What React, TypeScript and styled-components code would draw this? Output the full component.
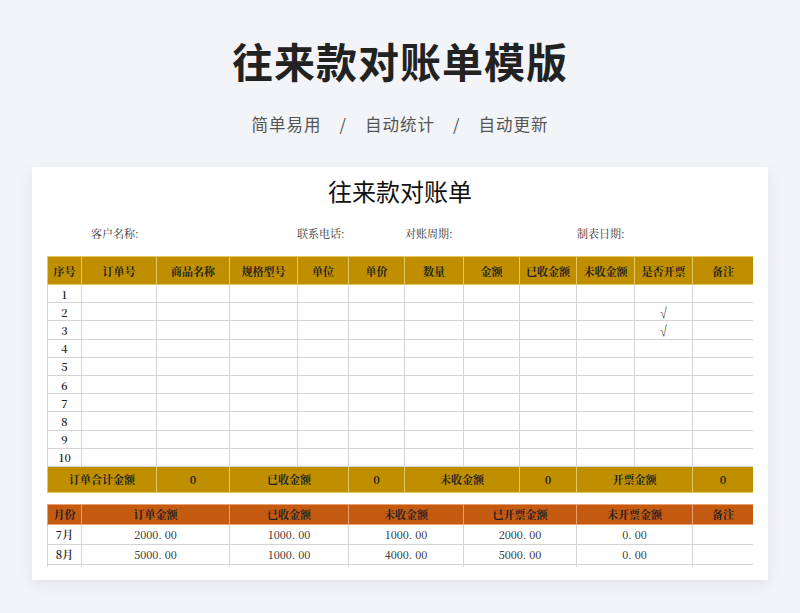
import React from "react";
import styled, { createGlobalStyle } from "styled-components";

const Global = createGlobalStyle`
  html, body { margin: 0; padding: 0; background: #f2f4f7; }
  body { font-family: "Noto Sans CJK SC", sans-serif; }
`;

const Page = styled.div`
  width: 800px; height: 613px; overflow: hidden;
  display: flex; flex-direction: column; align-items: center;
`;
const BigTitle = styled.h1`
  margin: 33px 0 0; font-size: 41px; line-height: 54px; font-weight: 700; color: #222;
  letter-spacing: 1px;
`;
const Sub = styled.div`
  margin-top: 25px; font-size: 16.5px; line-height: 24px; color: #555; display: flex; gap: 18px;
  letter-spacing: 1px;
`;
const Card = styled.div`
  margin-top: 31px; width: 736px; height: 413px; flex-shrink: 0; background: #fff;
  box-shadow: 0 4px 14px rgba(0,0,0,0.08); overflow: hidden; box-sizing: border-box;
  padding: 0 15px 13px 15px;
  font-family: "Noto Serif CJK SC", "Noto Sans CJK SC", serif;
`;
const Clip = styled.div`
  height: 100%; overflow: hidden;
`;
const SheetTitle = styled.div`
  text-align: center; font-size: 24px; line-height: 30px; margin-top: 9px; color: #111;
  font-family: "Noto Sans CJK SC", sans-serif;
`;
const Info = styled.div`
  display: grid; grid-template-columns: 44px 206px 108px 172px 1fr;
  font-size: 11px; color: #333; margin-top: 19px; height: 18px;
  span { white-space: nowrap; }
`;
const Table = styled.table`
  border-collapse: collapse; table-layout: fixed; width: 706px;
  margin-top: ${(p: { $mt: number }) => p.$mt}px;
  font-size: 11px;
  td, th { padding: 0; text-align: center; border: 1px solid #d4d4d4; overflow: hidden; white-space: nowrap; }
`;
const HeadRow = styled.tr<{ $bg: string; $bd: string; $h: number }>`
  height: ${p => p.$h}px;
  th, td { background: ${p => p.$bg}; border-color: ${p => p.$bd}; font-weight: 700; color: #222; }
`;
const Row = styled.tr<{ $h: number }>`
  height: ${p => p.$h}px; color: #222;
  td:first-child { font-weight: 600; }
`;

const cols = [34, 75, 73, 68, 51, 56, 59, 56, 57, 58, 58, 61];
const heads = ["序号", "订单号", "商品名称", "规格型号", "单位", "单价", "数量", "金额", "已收金额", "未收金额", "是否开票", "备注"];
const cols2 = [34, 148, 119, 115, 113, 116, 61];
const heads2 = ["月份", "订单金额", "已收金额", "未收金额", "已开票金额", "未开票金额", "备注"];
const data2 = [
  ["7月", "2000. 00", "1000. 00", "1000. 00", "2000. 00", "0. 00", ""],
  ["8月", "5000. 00", "1000. 00", "4000. 00", "5000. 00", "0. 00", ""],
  ["", "", "", "", "", "", ""],
];

export default function App() {
  return (
    <Page>
      <Global />
      <BigTitle>往来款对账单模版</BigTitle>
      <Sub><span>简单易用</span><span>/</span><span>自动统计</span><span>/</span><span>自动更新</span></Sub>
      <Card>
        <Clip>
          <SheetTitle>往来款对账单</SheetTitle>
          <Info><span /><span>客户名称:</span><span>联系电话:</span><span>对账周期:</span><span>制表日期:</span></Info>
          <Table $mt={13}>
            <colgroup>{cols.map((w, i) => <col key={i} style={{ width: w }} />)}</colgroup>
            <tbody>
              <HeadRow $bg="#bf8f00" $bd="#e6c766" $h={28}>{heads.map(h => <th key={h}>{h}</th>)}</HeadRow>
              {Array.from({ length: 10 }, (_, r) => (
                <Row key={r} $h={18.2}>
                  {cols.map((_, c) => <td key={c}>{c === 0 ? r + 1 : c === 10 && (r === 1 || r === 2) ? "√" : ""}</td>)}
                </Row>
              ))}
              <HeadRow $bg="#bf8f00" $bd="#e6c766" $h={26}>
                <td colSpan={2}>订单合计金额</td><td>0</td><td colSpan={2}>已收金额</td><td>0</td>
                <td colSpan={2}>未收金额</td><td>0</td><td colSpan={2}>开票金额</td><td>0</td>
              </HeadRow>
            </tbody>
          </Table>
          <Table $mt={11}>
            <colgroup>{cols2.map((w, i) => <col key={i} style={{ width: w }} />)}</colgroup>
            <tbody>
              <HeadRow $bg="#c55a11" $bd="#e8a070" $h={20}>{heads2.map(h => <th key={h}>{h}</th>)}</HeadRow>
              {data2.map((r, i) => <Row key={i} $h={20}>{r.map((v, j) => <td key={j}>{v}</td>)}</Row>)}
            </tbody>
          </Table>
        </Clip>
      </Card>
    </Page>
  );
}
